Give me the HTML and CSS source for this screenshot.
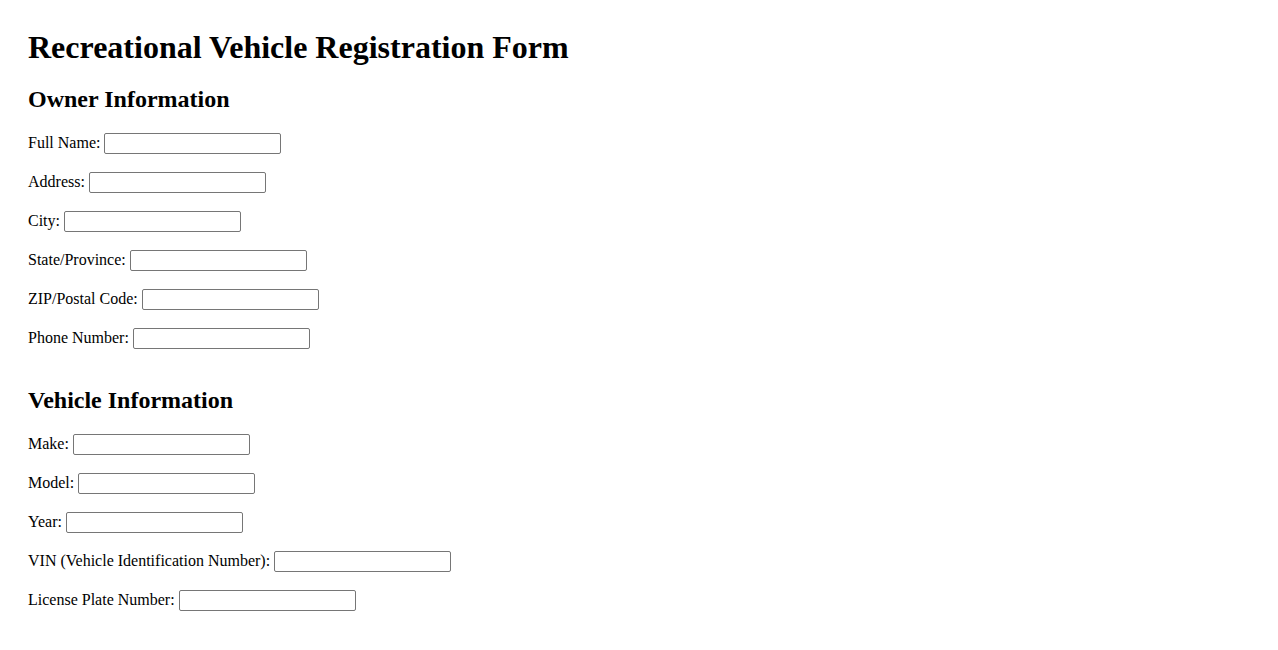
FILE: index.html
```html
<!DOCTYPE html>
<html lang="en">
<head>
<meta charset="utf-8">
<title>Recreational Vehicle Registration Form</title>
<link rel="stylesheet" href="styles.css">
</head>
<body>
<div class="page">
  <h1>Recreational Vehicle Registration Form</h1>
  <form>
    <div class="section">
      <h2>Owner Information</h2>
      <p class="row"><label for="fullname">Full Name:</label> <input type="text" id="fullname"></p>
      <p class="row"><label for="address">Address:</label> <input type="text" id="address"></p>
      <p class="row"><label for="city">City:</label> <input type="text" id="city"></p>
      <p class="row"><label for="state">State/Province:</label> <input type="text" id="state"></p>
      <p class="row"><label for="zip">ZIP/Postal Code:</label> <input type="text" id="zip"></p>
      <p class="row"><label for="phone">Phone Number:</label> <input type="text" id="phone"></p>
    </div>
    <div class="section">
      <h2>Vehicle Information</h2>
      <p class="row"><label for="make">Make:</label> <input type="text" id="make"></p>
      <p class="row"><label for="model">Model:</label> <input type="text" id="model"></p>
      <p class="row"><label for="year">Year:</label> <input type="text" id="year"></p>
      <p class="row"><label for="vin">VIN (Vehicle Identification Number):</label> <input type="text" id="vin"></p>
      <p class="row"><label for="plate">License Plate Number:</label> <input type="text" id="plate"></p>
    </div>
  </form>
</div>
</body>
</html>
```
FILE: styles.css
```css
body {
  margin: 8px;
  font-family: "Liberation Serif", "Times New Roman", serif;
  font-size: 16px;
  color: #000;
  background: #fff;
}
.page {
  display: flow-root;
  padding: 0 20px;
}
h1 {
  font-size: 32px;
  margin: 21.44px 0 0;
}
h2 {
  font-size: 24px;
  margin: 19.92px 0;
}
.section {
  margin-bottom: 38px;
}
.row {
  margin: 18px 0;
}
input[type="text"] {
  box-sizing: border-box;
  width: 177px;
  height: 21px;
  font-family: Arial, "Liberation Sans", sans-serif;
  font-size: 13.33px;
  border: 1px solid #767676;
  border-radius: 2px;
  padding: 1px 2px;
}
```
